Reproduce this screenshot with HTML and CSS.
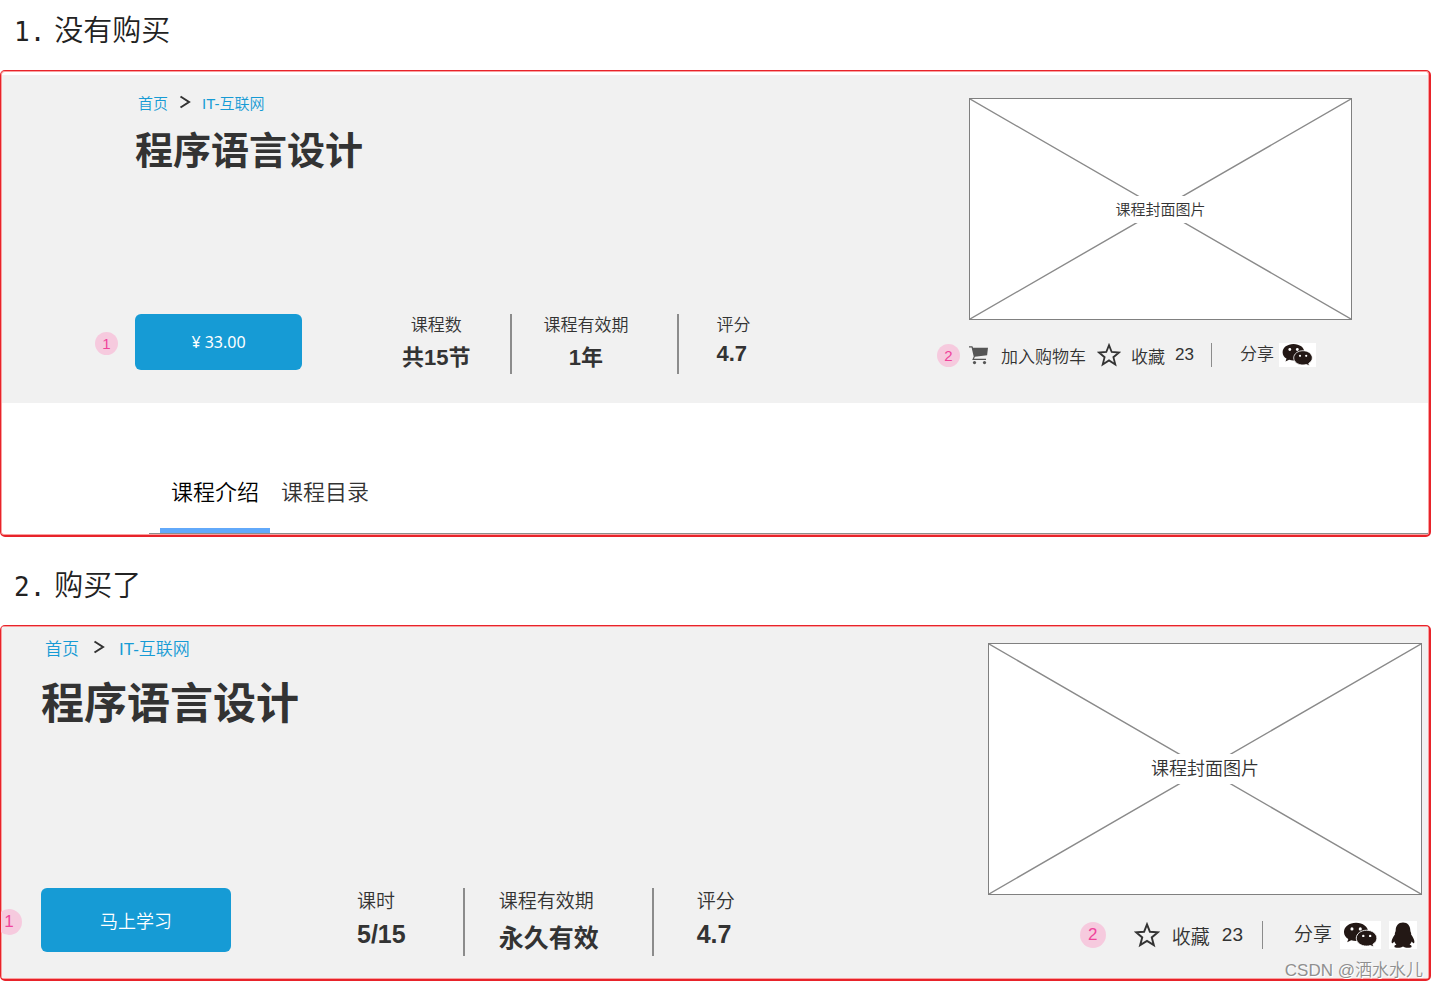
FILE: index.html
```html
<!DOCTYPE html>
<html lang="zh-CN">
<head>
    <meta charset="UTF-8">
    <meta name="viewport" content="width=device-width, initial-scale=1.0">
    <title>程序语言设计</title>
    <link rel="stylesheet" href="styles.css">
</head>
<body>
    <svg width="0" height="0" class="defs">
        <symbol id="arrow" viewBox="0 0 12 14">
            <path d="M1.5 1.5 L10 7 L1.5 12.5" fill="none" stroke="#333" stroke-width="2"/>
        </symbol>
        <symbol id="cart" viewBox="0 0 20 20">
            <path d="M0 1.2h3.4l.7 1.6H19l-.9 7.4-12.2 1.5-.9 2h12v1.3H3.2l1.5-3.6L2.6 2.6H0z" fill="#555"/>
            <circle cx="5.5" cy="17.6" r="1.6" fill="#555"/>
            <circle cx="15.5" cy="17.6" r="1.6" fill="#555"/>
        </symbol>
        <symbol id="star" viewBox="0 0 24 24">
            <path d="M12 2.2l2.700 6.800 7.400.5-5.700 4.700 1.900 7.200L12 17.400l-6.300 4 1.900-7.200L1.900 9.500l7.400-.5z" fill="none" stroke="#333" stroke-width="1.800"/>
        </symbol>
        <symbol id="wechat" viewBox="0 0 37 24">
            <path d="M14.500 1C8.300 1 3.600 4.600 3.600 9.200c0 2.700 1.500 4.900 3.900 6.400l-1 3 3.600-1.800c1.400.4 2.800.6 4.400.6 6.200 0 10.900-3.600 10.900-8.200S20.700 1 14.500 1z" fill="#231815"/>
            <circle cx="10.800" cy="6.500" r="1.400" fill="#fff"/>
            <circle cx="18.300" cy="6.500" r="1.400" fill="#fff"/>
            <path d="M24 7.700c-5.200 0-9.300 3.200-9.300 7.200s4.100 7.100 9.300 7.100c1.200 0 2.400-.2 3.500-.5l3 1.500-.8-2.600c2.200-1.400 3.600-3.300 3.600-5.500 0-4-4.100-7.200-9.300-7.200z" fill="#231815" stroke="#fff" stroke-width=".8"/>
            <circle cx="21" cy="12.800" r="1.100" fill="#fff"/>
            <circle cx="27.200" cy="12.800" r="1.100" fill="#fff"/>
        </symbol>
        <symbol id="qq" viewBox="0 0 28 28">
            <path d="M14 1.500c-4.700 0-7.300 3.500-7.300 7.700 0 1-.3 1.700-.7 2.500-.3.600-.2 1.200-.1 1.800-1.700 2.300-3.300 5-3.300 7.300 0 1.800 1 1.900 2.700-.4.400 1.300 1.100 2.300 2.100 3.200-1.200.5-2 1.100-2 1.800 0 1.900 6.400 1.900 8.600.2 2.200 1.700 8.600 1.700 8.600-.2 0-.7-.8-1.300-2-1.800 1-.9 1.700-1.900 2.100-3.200 1.700 2.300 2.700 2.200 2.700.4 0-2.300-1.600-5-3.300-7.300.1-.6.200-1.200-.1-1.800-.4-.8-.7-1.500-.7-2.500 0-4.200-2.600-7.700-7.300-7.700z" fill="#231815"/>
        </symbol>
    </svg>

    <main class="page">
        <h2 class="case"><span class="case-no">1.</span>没有购买</h2>
        <section class="panel">
            <div class="hero">
                <div class="info">
                    <nav class="crumbs">
                        <a href="#">首页</a>
                        <svg class="crumb-arrow"><use href="#arrow"/></svg>
                        <a href="#">IT-互联网</a>
                    </nav>
                    <h1 class="title">程序语言设计</h1>
                    <div class="summary">
                        <span class="badge badge--buy">1</span>
                        <button class="buy">¥ 33.00</button>
                        <dl class="stats stats--center">
                            <div class="stat">
                                <dt>课程数</dt>
                                <dd class="han">共15节</dd>
                            </div>
                            <div class="stat">
                                <dt>课程有效期</dt>
                                <dd class="han">1年</dd>
                            </div>
                            <div class="stat">
                                <dt>评分</dt>
                                <dd>4.7</dd>
                            </div>
                        </dl>
                    </div>
                </div>
                <div class="media">
                    <div class="cover">
                        <svg class="cover-lines" viewBox="0 0 100 100" preserveAspectRatio="none">
                            <path d="M0 0L100 100M100 0L0 100"/>
                        </svg>
                        <span class="cover-label">课程封面图片</span>
                    </div>
                    <div class="actions">
                        <span class="badge badge--cart">2</span>
                        <button class="action cart">
                            <svg class="icon-cart"><use href="#cart"/></svg>
                            <span class="low">加入购物车</span>
                        </button>
                        <button class="action">
                            <svg class="icon-star"><use href="#star"/></svg>
                            <span class="low">收藏</span>
                            <span>23</span>
                        </button>
                        <div class="share">
                            <span>分享</span>
                            <button class="share-btn" aria-label="微信"><svg class="icon-wechat"><use href="#wechat"/></svg></button>
                        </div>
                    </div>
                </div>
            </div>
            <nav class="tabs">
                <a class="tab tab--on" href="#">课程介绍</a>
                <a class="tab" href="#">课程目录</a>
            </nav>
        </section>

        <h2 class="case"><span class="case-no">2.</span>购买了</h2>
        <section class="panel panel--bought">
            <div class="hero">
                <div class="info">
                    <nav class="crumbs">
                        <a href="#">首页</a>
                        <svg class="crumb-arrow"><use href="#arrow"/></svg>
                        <a href="#">IT-互联网</a>
                    </nav>
                    <h1 class="title">程序语言设计</h1>
                    <div class="summary">
                        <span class="badge badge--buy">1</span>
                        <button class="buy">马上学习</button>
                        <dl class="stats">
                            <div class="stat">
                                <dt>课时</dt>
                                <dd>5/15</dd>
                            </div>
                            <div class="stat">
                                <dt>课程有效期</dt>
                                <dd class="han">永久有效</dd>
                            </div>
                            <div class="stat">
                                <dt>评分</dt>
                                <dd>4.7</dd>
                            </div>
                        </dl>
                    </div>
                </div>
                <div class="media">
                    <div class="cover">
                        <svg class="cover-lines" viewBox="0 0 100 100" preserveAspectRatio="none">
                            <path d="M0 0L100 100M100 0L0 100"/>
                        </svg>
                        <span class="cover-label">课程封面图片</span>
                    </div>
                    <div class="actions">
                        <span class="badge">2</span>
                        <button class="action">
                            <svg class="icon-star"><use href="#star"/></svg>
                            <span class="low">收藏</span>
                            <span>23</span>
                        </button>
                        <div class="share">
                            <span>分享</span>
                            <button class="share-btn" aria-label="微信"><svg class="icon-wechat"><use href="#wechat"/></svg></button>
                            <button class="share-btn" aria-label="QQ"><svg class="icon-qq"><use href="#qq"/></svg></button>
                        </div>
                    </div>
                </div>
            </div>
            <span class="watermark">CSDN @洒水水儿</span>
        </section>
    </main>
</body>
</html>
```

FILE: styles.css
```css
*{
    padding: 0;
    margin: 0;
    box-sizing: border-box;
}
body{
    background-color: #fff;
    color: #333;
    font-family: "Liberation Sans", "Noto Sans CJK SC", sans-serif;
    font-weight: 350;
}
a{
    text-decoration: none;
}
button{
    border: none;
    background: none;
    color: inherit;
    font: inherit;
    cursor: pointer;
}
svg{
    display: block;
}
.defs{
    position: absolute;
}
.page{
    padding-right: 7px;
}
.case{
    display: flex;
    align-items: baseline;
    gap: 9px;
    padding: 29px 0 18px 14px;
    color: #222;
    font-size: 29px;
    line-height: 40px;
    font-weight: 350;
}
.case:first-child{
    padding-top: 11px;
}
.case-no{
    font-family: "DejaVu Sans Mono", monospace;
    font-size: 26px;
}
.panel{
    position: relative;
    overflow: hidden;
    padding: 1px;
    border: solid #e8232a;
    border-width: 1px 2px 2px 1px;
    border-radius: 5px;
    box-shadow: inset 0 0 0 1px #f9a0a0;
}
.hero{
    display: flex;
    justify-content: space-between;
    margin-top: 3px;
    padding: 23px 76px 36px 133px;
    background-color: #f1f1f1;
}

/* left side */
.info{
    display: flex;
    flex-direction: column;
}
.crumbs{
    display: flex;
    align-items: center;
    gap: 11px;
    height: 8px;
    padding-left: 3px;
    font-size: 15px;
}
.crumbs a{
    color: #169bd5;
}
.crumb-arrow{
    width: 12px;
    height: 14px;
}
.title{
    margin-top: 17px;
    font-size: 38px;
    line-height: 56px;
    font-weight: 700;
}
.summary{
    position: relative;
    display: flex;
    align-items: flex-start;
    margin-top: auto;
    margin-bottom: -7px;
}
.buy{
    width: 167px;
    height: 56px;
    border-radius: 6px;
    background-color: #169bd5;
    color: #fff;
    font-family: "Noto Sans", "Noto Sans CJK SC", sans-serif;
    font-size: 16px;
    font-weight: 400;
}
.stats{
    display: flex;
    margin-left: 100px;
}
.stat{
    height: 60px;
    padding: 0 49px 0 31px;
    border-right: 2px solid #8c8c8c;
    font-size: 17px;
}
.stat:first-child{
    padding: 0 40px 0 0;
}
.stat:last-child{
    padding: 0 0 0 37px;
    border-right: none;
    text-align: left;
}
.stats--center{
    text-align: center;
}
.stat dt{
    line-height: 24px;
}
.stat dd{
    font-size: 22px;
    line-height: 32px;
    font-weight: 700;
}
.stat .han{
    padding-top: 4px;
}
.badge{
    width: 23px;
    height: 23px;
    border-radius: 50%;
    background-color: #f6cade;
    color: #f0439b;
    font-size: 15px;
    line-height: 23px;
    text-align: center;
}
.badge--buy{
    position: absolute;
    top: 18px;
    left: -40px;
}

/* right side */
.media{
    width: 383px;
}
.cover{
    position: relative;
    display: flex;
    align-items: center;
    justify-content: center;
    height: 222px;
    border: 1px solid #808080;
    background-color: #fff;
}
.cover-lines{
    position: absolute;
    width: 100%;
    height: 100%;
    stroke: #8a8a8a;
    stroke-width: 1.4;
}
.cover-lines path{
    vector-effect: non-scaling-stroke;
}
.cover-label{
    position: relative;
    background-color: #fff;
    font-size: 15px;
    line-height: 27px;
}
.actions{
    display: flex;
    align-items: center;
    height: 24px;
    margin-top: 23px;
    font-size: 17px;
    line-height: 24px;
}
.badge--cart{
    margin-left: -32px;
    margin-right: 9px;
}
.action{
    display: flex;
    align-items: center;
    gap: 10px;
}
.cart{
    gap: 12px;
    margin-right: 11px;
}
.low{
    padding-top: 6px;
}
.icon-cart{
    width: 20px;
    height: 20px;
}
.icon-star{
    width: 24px;
    height: 24px;
}
.icon-wechat{
    width: 37px;
    height: 24px;
}
.share{
    display: flex;
    align-items: center;
    gap: 5px;
    margin-left: 17px;
    padding-left: 28px;
    border-left: 1px solid #8c8c8c;
}
.share-btn{
    background-color: #fff;
}

/* tabs */
.tabs{
    display: flex;
    margin-left: 147px;
    padding: 60px 0 0 11px;
    border-bottom: 1px solid #8c8c8c;
}
.tab{
    width: 110px;
    height: 70px;
    border-bottom: 5px solid transparent;
    color: #333;
    font-size: 22px;
    line-height: 60px;
    text-align: center;
}
.tab--on{
    border-color: #62a9fa;
    color: #000;
}

/* bought course, everything a size larger */
.panel--bought .hero{
    margin-top: 0;
    padding: 16px 6px 29px 39px;
}
.panel--bought .crumbs{
    gap: 14px;
    padding-left: 4px;
    font-size: 17px;
}
.panel--bought .title{
    font-size: 43px;
    line-height: 72px;
}
.panel--bought .buy{
    width: 190px;
    height: 64px;
    font-size: 18px;
    font-weight: 350;
}
.panel--bought .badge{
    width: 26px;
    height: 26px;
    font-size: 17px;
    line-height: 26px;
}
.panel--bought .badge--buy{
    top: 21px;
    left: -45px;
}
.panel--bought .stats{
    margin-left: 126px;
}
.panel--bought .stat{
    height: 68px;
    padding: 0 53px 0 34px;
    font-size: 19px;
}
.panel--bought .stat:first-child{
    padding: 0 57px 0 0;
}
.panel--bought .stat:last-child{
    padding: 0 0 0 43px;
}
.panel--bought .stat dt{
    line-height: 28px;
}
.panel--bought .stat dd{
    font-size: 25px;
    line-height: 37px;
}
.panel--bought .media{
    width: 434px;
}
.panel--bought .cover{
    height: 252px;
}
.panel--bought .cover-label{
    font-size: 18px;
    line-height: 30px;
}
.panel--bought .actions{
    justify-content: flex-end;
    height: 28px;
    margin-top: 26px;
    padding-right: 5px;
    font-size: 19px;
    line-height: 28px;
}
.panel--bought .action{
    gap: 12px;
    margin-left: 28px;
}
.panel--bought .icon-star{
    width: 26px;
    height: 26px;
}
.panel--bought .icon-wechat{
    width: 41px;
    height: 28px;
}
.icon-qq{
    width: 28px;
    height: 28px;
}
.panel--bought .share{
    gap: 8px;
    margin-left: 19px;
    padding-left: 31px;
}
.watermark{
    position: absolute;
    right: 6px;
    bottom: -4px;
    color: #8f8f8f;
    font-size: 17px;
    line-height: 24px;
    text-shadow: 1px 1px 0 #fff;
}
```
